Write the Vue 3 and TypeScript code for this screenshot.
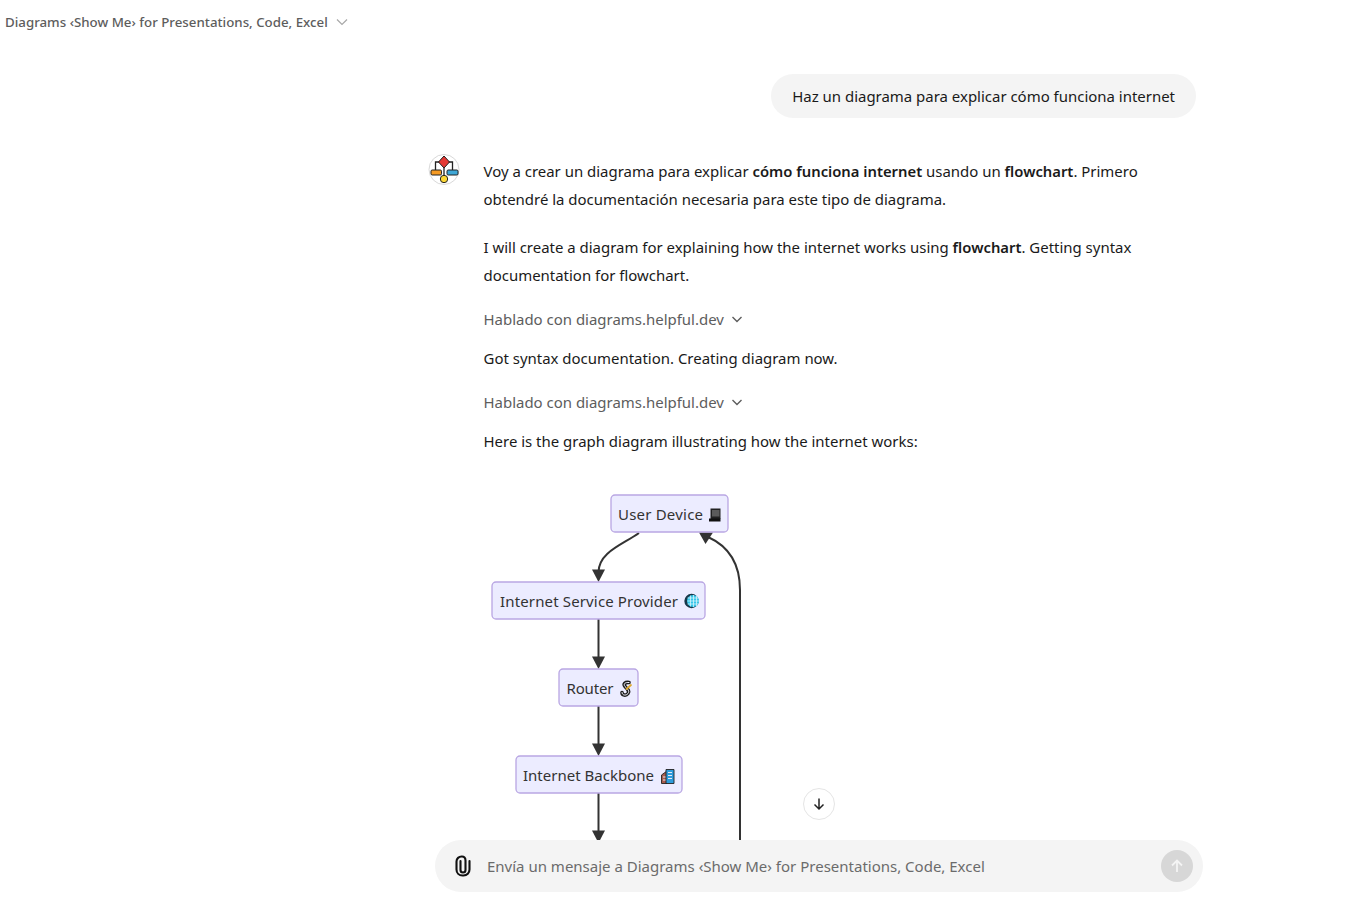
<script setup lang="ts">
interface Tool { label: string }
const placeholder = 'Envía un mensaje a Diagrams ‹Show Me› for Presentations, Code, Excel'
const toolLabel: Tool = { label: 'Hablado con diagrams.helpful.dev' }
</script>

<template>
  <div class="page">
    <header class="topbar">
      <span class="title">Diagrams ‹Show Me› for Presentations, Code, Excel</span>
      <svg class="title-chev" width="12" height="12" viewBox="0 0 12 12" fill="none"><path d="M1 3.500 L6 8.500 L11 3.500" stroke="#a8a8a8" stroke-width="1.200"/></svg>
    </header>

    <main class="thread">
      <div class="column">
        <div class="user-row"><div class="bubble">Haz un diagrama para explicar cómo funciona internet</div></div>

        <div class="assistant">
          <div class="avatar">
            <svg width="32" height="32" viewBox="0 0 32 32">
              <circle cx="16" cy="15.500" r="15" fill="#fff" stroke="#d9d9d9"/>
              <path d="M7.500 17 V8 H24.500 V17 M16 14 V22" fill="none" stroke="#222" stroke-width="1.300"/>
              <path d="M16 2 L21.500 8 L16 14 L10.500 8 Z" fill="#e53935" stroke="#222" stroke-width="1"/>
              <rect x="3" y="16" width="10.500" height="5" rx="1.200" fill="#f59a23" stroke="#222" stroke-width="1"/>
              <rect x="19" y="16" width="11" height="5" rx="1.200" fill="#3fa7d6" stroke="#222" stroke-width="1"/>
              <circle cx="16" cy="25" r="3.700" fill="#fdd835" stroke="#222" stroke-width="1"/>
            </svg>
          </div>
          <div class="body">
            <p>Voy a crear un diagrama para explicar <b>cómo funciona internet</b> usando un <b>flowchart</b>. Primero obtendré la documentación necesaria para este tipo de diagrama.</p>
            <p class="second">I will create a diagram for explaining how the internet works using <b>flowchart</b>. Getting syntax documentation for flowchart.</p>
            <div class="tool">
              <span>{{ toolLabel.label }}</span>
              <svg width="12" height="12" viewBox="0 0 12 12" fill="none"><path d="M1.500 4 L6 8.500 L10.500 4" stroke="#5d5d5d" stroke-width="1.400"/></svg>
            </div>
            <p class="after-tool">Got syntax documentation. Creating diagram now.</p>
            <div class="tool">
              <span>{{ toolLabel.label }}</span>
              <svg width="12" height="12" viewBox="0 0 12 12" fill="none"><path d="M1.500 4 L6 8.500 L10.500 4" stroke="#5d5d5d" stroke-width="1.400"/></svg>
            </div>
            <p class="after-tool">Here is the graph diagram illustrating how the internet works:</p>

            <svg class="diagram" width="280" height="380" viewBox="484 480 280 380">
              <g fill="none" stroke="#333" stroke-width="2">
                <path d="M639 533 C622 545 599 552 598.500 572"/>
                <path d="M598.500 619 V660"/>
                <path d="M598.500 706 V747"/>
                <path d="M598.500 793 V834"/>
                <path d="M740 860 V590 C740 562 728 546 708 537"/>
              </g>
              <g fill="#333">
                <path d="M592 569.500 H605 L598.500 582 Z"/>
                <path d="M592 656.500 H605 L598.500 669 Z"/>
                <path d="M592 743.500 H605 L598.500 756 Z"/>
                <path d="M592 830.500 H605 L598.500 843 Z"/>
                <path d="M699 532.500 L713 532.500 L705.500 544 Z"/>
              </g>
              <g fill="#ECECFF" stroke="#B9A6E3" stroke-width="1.300">
                <rect x="611" y="495" width="117" height="37" rx="4"/>
                <rect x="492" y="582" width="213" height="37" rx="4"/>
                <rect x="559" y="669" width="79" height="37" rx="4"/>
                <rect x="516" y="756" width="166" height="37" rx="4"/>
              </g>
              <g class="node-text">
                <text x="618" y="520" textLength="85">User Device</text>
                <text x="500" y="607" textLength="178">Internet Service Provider</text>
                <text x="566.500" y="694" textLength="47">Router</text>
                <text x="523" y="781" textLength="131">Internet Backbone</text>
              </g>
              <!-- laptop -->
              <g>
                <rect x="710.500" y="508.500" width="10" height="10.500" fill="#222"/>
                <rect x="712" y="510" width="7.500" height="6.500" fill="#5b5b5b"/>
                <path d="M709 518.500 H720.500 V521.500 H709 Z" fill="#111"/>
              </g>
              <!-- globe -->
              <g>
                <circle cx="691.500" cy="601" r="7.200" fill="#17384a"/>
                <circle cx="693" cy="601" r="6" fill="#35c6ea"/>
                <path d="M687.500 598 H698.500 M687.500 601 H699 M687.500 604 H698.500 M690.500 595.500 V606.500 M693.500 595 V607 M696.500 596 V606" stroke="#d5f4fb" stroke-width=".8" fill="none"/>
              </g>
              <!-- link -->
              <g fill="none" stroke-linecap="round">
                <path d="M629 682.500 C625 682 623 684 625 686.500 C627.500 689 630 691 628 693.500 C626 696 622 695.500 622 692.500" stroke="#1c1c1c" stroke-width="3.600"/>
                <path d="M629 682.500 C625 682 623 684 625 686.500 C627.500 689 630 691 628 693.500 C626 696 622 695.500 622 692.500" stroke="#f4f4ff" stroke-width="1"/>
                <path d="M631 685 L626.500 689" stroke="#e0a92c" stroke-width="1.800"/>
              </g>
              <!-- buildings -->
              <g>
                <path d="M661.500 783.500 V775 L667 771 V783.500 Z" fill="#a65c4e" stroke="#222" stroke-width=".9"/>
                <path d="M666 783.500 V769.500 H674 V783.500 Z" fill="#2d9cdb" stroke="#222" stroke-width=".9"/>
                <path d="M668 772.500 H672 M668 775.500 H672 M668 778.500 H672 M663 777 H665.500 M663 780 H665.500" stroke="#e8e8f5" stroke-width="1"/>
              </g>
            </svg>
          </div>
        </div>
      </div>

      <button class="scroll-down" type="button" aria-label="Scroll down">
        <svg width="14" height="14" viewBox="0 0 14 14" fill="none"><path d="M7 1.500 V12 M2.500 7.500 L7 12 L11.500 7.500" stroke="#222" stroke-width="1.500"/></svg>
      </button>
    </main>

    <footer class="composer-wrap">
      <div class="composer">
        <svg class="clip" width="18" height="22" viewBox="0 0 18 22" fill="none">
          <path d="M6.500 6 V15 C6.500 16.500 7.600 17.500 9 17.500 C10.400 17.500 11.500 16.500 11.500 15 V5.500 C11.500 3 10 1.500 8 1.500 H7.500 C5 1.500 2.500 3.500 2.500 6.500 V14.500 C2.500 18 5 20.500 8.500 20.500 H9.500 C13 20.500 15.500 18 15.500 14.500 V6" stroke="#111" stroke-width="2.100" stroke-linecap="round"/>
        </svg>
        <span class="placeholder">{{ placeholder }}</span>
        <span class="send">
          <svg width="16" height="16" viewBox="0 0 16 16" fill="none"><path d="M8 14 V2.500 M3 7.500 L8 2.500 L13 7.500" stroke="#f4f4f4" stroke-width="1.800"/></svg>
        </span>
      </div>
    </footer>
  </div>
</template>

<style>
html, body { margin: 0; background: #fff; }
</style>

<style scoped>
.page {
  width: 1369px;
  height: 902px;
  display: flex;
  flex-direction: column;
  overflow: hidden;
  font-family: "Noto Sans", "Open Sans", sans-serif;
  color: #1a1a1a;
  background: #fff;
  font-size: 14.960px;
}
.topbar {
  height: 44px;
  flex: none;
  display: flex;
  align-items: center;
  gap: 8px;
  padding-left: 5px;
}
.title { font-size: 13.300px; font-weight: 500; color: #5d5d5d; }
.thread {
  flex: 1;
  min-height: 0;
  position: relative;
  overflow: hidden;
}
.column {
  width: 768px;
  margin-left: 428px;
  padding-top: 30px;
}
.user-row { display: flex; justify-content: flex-end; }
.bubble {
  height: 44px;
  display: flex;
  align-items: center;
  padding: 0 21px;
  border-radius: 22px;
  background: #f4f4f4;
}
.assistant { display: flex; margin-top: 36px; gap: 23.500px; }
.avatar { flex: none; width: 32px; height: 32px; }
.body { flex: 1; min-width: 0; margin-top: 3px; }
p { margin: 0; line-height: 28px; }
b { font-weight: 600; font-size: 14.800px; }
.second { margin-top: 20px; }
.tool {
  display: flex;
  align-items: center;
  gap: 7px;
  height: 28px;
  margin-top: 16px;
  color: #5d5d5d;
}
.after-tool { margin-top: 11px; }
.diagram { display: block; margin-top: 25px; margin-left: 0.500px; }
.node-text text { font-size: 15px; fill: #333; font-family: "Noto Sans", "Open Sans", sans-serif; }
.scroll-down {
  position: absolute;
  left: 803px;
  bottom: 20px;
  width: 32px;
  height: 32px;
  padding: 0;
  border-radius: 50%;
  border: 1px solid #e5e5e5;
  background: #fff;
  display: flex;
  align-items: center;
  justify-content: center;
}
.composer-wrap { height: 62px; flex: none; padding-left: 435px; }
.composer {
  position: relative;
  z-index: 1;
  width: 768px;
  height: 52px;
  border-radius: 26px;
  background: #f4f4f4;
  display: flex;
  align-items: center;
  box-sizing: border-box;
  padding: 0 10px 0 19px;
}
.clip { flex: none; }
.placeholder { margin-left: 15px; flex: 1; font-size: 15px; color: #6b6b6b; }
.send {
  width: 32px;
  height: 32px;
  border-radius: 50%;
  background: #d7d7d7;
  display: flex;
  align-items: center;
  justify-content: center;
}
</style>
